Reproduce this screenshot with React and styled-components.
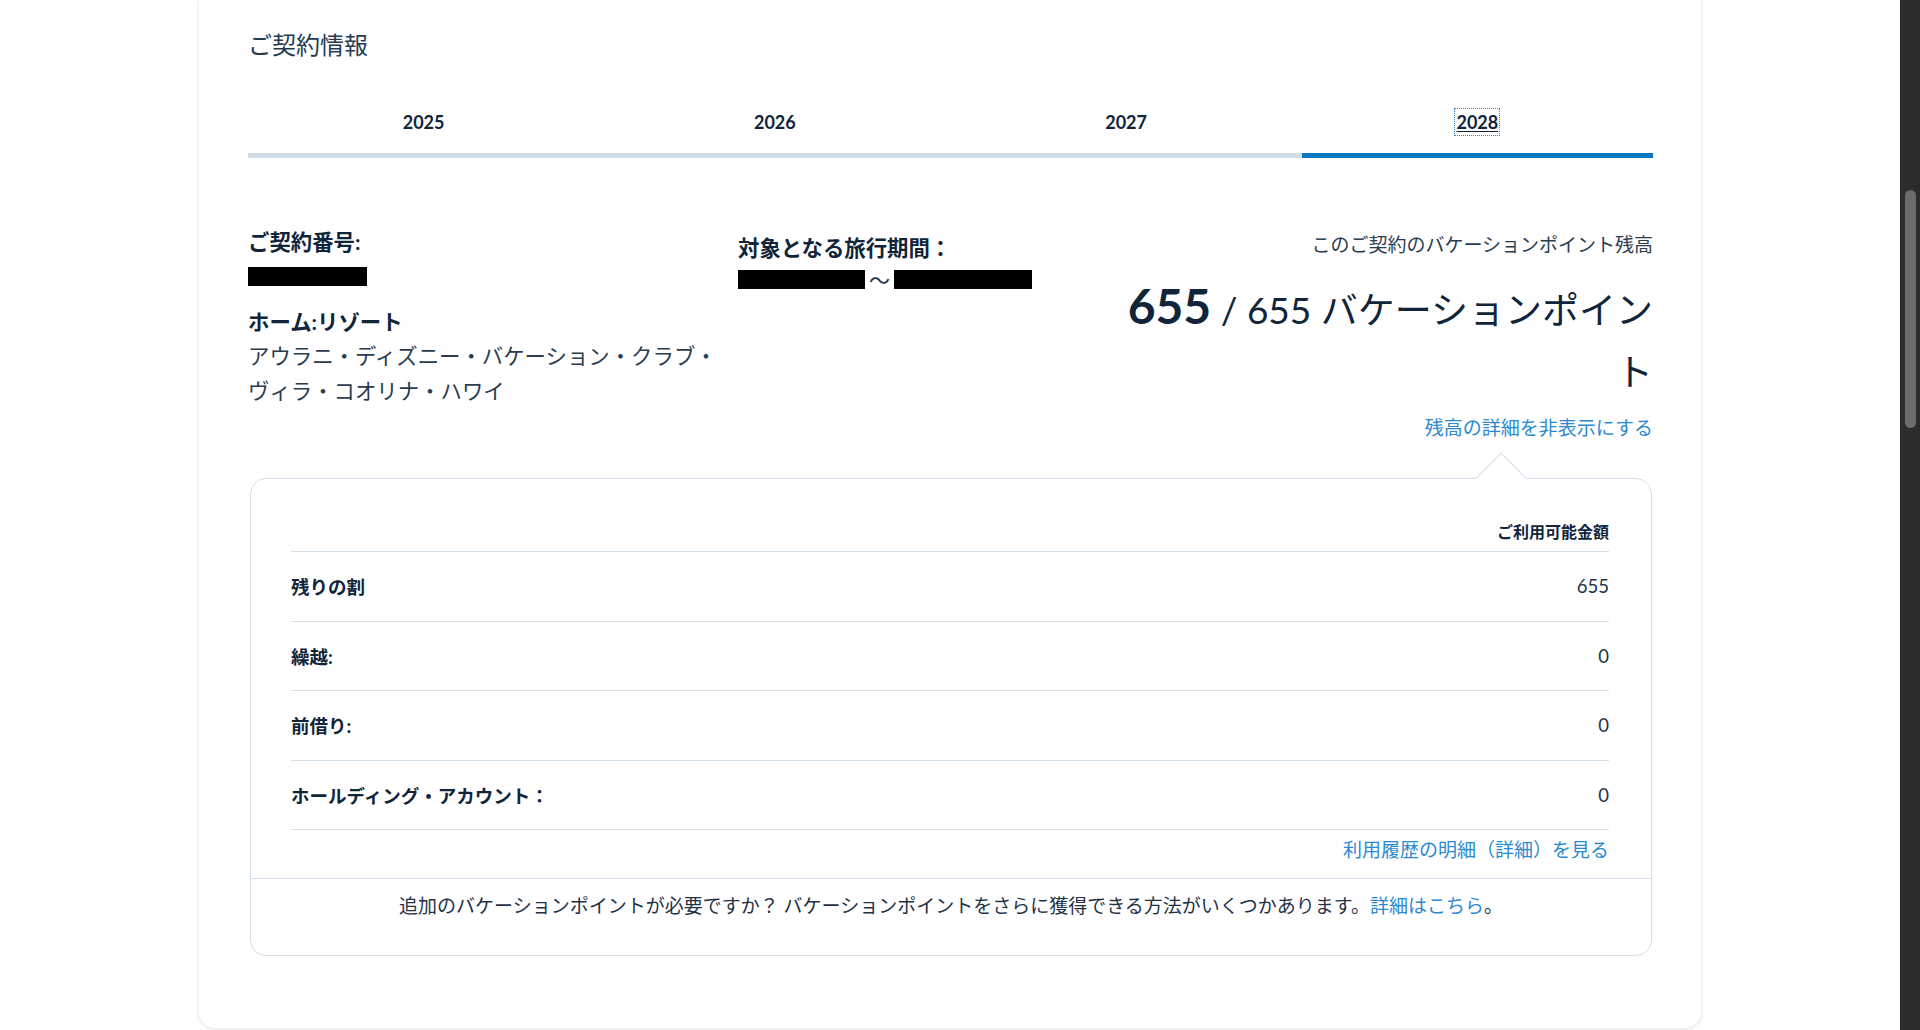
import React from 'react';
import styled, { createGlobalStyle } from 'styled-components';

// card 1502w, content 1405w
// tabs 4 x 351w, bar 5h
// panel 1401w, rows 69h

const GlobalStyle = createGlobalStyle`
  html, body {
    margin: 0;
    padding: 0;
    height: 100%;
    overflow: hidden;
    background: #fefefe;
  }
  body {
    font-family: "Lato", "Noto Sans CJK JP", "Noto Sans", sans-serif;
    color: #1f3347;
  }
  * { box-sizing: border-box; }
`;

const Shell = styled.div`
  display: flex;
  height: 1030px;
`;

const Viewport = styled.main`
  flex: 1;
  display: flex;
  justify-content: center;
  align-items: flex-end;
  padding-bottom: 2px;
`;

const Card = styled.section`
  width: 1502px;
  height: 1028px;
  background: #fff;
  border-radius: 0 0 16px 16px;
  box-shadow: 0 1px 4px rgba(20, 30, 45, 0.12);
  padding: 29px 48px 0 49px;
  display: flex;
  flex-direction: column;
`;

const Heading = styled.h2`
  margin: 0;
  font-size: 24px;
  line-height: 32px;
  font-weight: 400;
  color: #253a4f;
`;

const TabList = styled.div`
  display: flex;
  margin-top: 29px;
`;

const Tab = styled.div`
  flex: 1;
  text-align: center;
  padding: 20px 0 19px;
  border-bottom: 5px solid ${p => (p.$active ? '#0a79c2' : '#d1dde7')};
`;

const TabLabel = styled.span`
  display: inline-block;
  font-size: 18px;
  line-height: 24px;
  font-weight: 700;
  color: #10253a;
  ${p => p.$active && `
    text-decoration: underline;
    text-underline-offset: 2px;
    outline: 1px dotted #2b86cc;
    outline-offset: 1px;
  `}
`;

const Summary = styled.div`
  display: grid;
  grid-template-columns: 490px 373px 1fr;
  margin-top: 69px;
`;

const Column = styled.div`
  display: flex;
  flex-direction: column;
  align-items: ${p => (p.$right ? 'flex-end' : 'flex-start')};
  text-align: ${p => (p.$right ? 'right' : 'left')};
  padding-top: ${p => p.$offset || 0}px;
`;

const FieldLabel = styled.div`
  font-size: 21.4px;
  line-height: 30px;
  font-weight: 700;
  color: #10253a;
`;

const Redacted = styled.span`
  display: inline-block;
  width: ${p => p.$w}px;
  height: 19px;
  background: #000;
`;

const RedactedRow = styled.div`
  display: flex;
  align-items: center;
  margin-top: ${p => p.$gap}px;
`;

const Tilde = styled.span`
  font-size: 21px;
  line-height: 19px;
  margin: 0 4px;
  color: #1f3347;
`;

const ResortLabel = styled(FieldLabel)`
  line-height: 34px;
  margin-top: 19px;
`;

const ResortName = styled.div`
  font-size: 21.4px;
  line-height: 34.5px;
  color: #2a3d50;
`;

const BalanceCaption = styled.div`
  font-size: 19px;
  line-height: 28px;
  color: #2a3d50;
`;

const BalanceFigure = styled.div`
  margin-top: 16px;
  font-size: 37px;
  line-height: 62px;
  font-weight: 400;
  color: #10253a;
`;

const BalanceStrong = styled.strong`
  font-size: 48px;
  font-weight: 700;
`;

const TextLink = styled.a`
  color: #2a89cf;
  text-decoration: none;
  cursor: pointer;
`;

const ToggleLink = styled(TextLink)`
  margin-top: 11px;
  font-size: 19px;
  line-height: 28px;
`;

const Panel = styled.div`
  position: relative;
  margin: 36px 1px 0 2px;
  border: 1px solid #d3dfea;
  border-radius: 16px;
  background: #fff;
`;

const Notch = styled.span`
  position: absolute;
  top: -19px;
  right: 132px;
  width: 36px;
  height: 36px;
  background: #fff;
  border-top: 1px solid #d3dfea;
  border-left: 1px solid #d3dfea;
  transform: rotate(45deg);
`;

const PanelBody = styled.div`
  padding: 41px 42px 0 40px;
`;

const TableHead = styled.div`
  text-align: right;
  font-size: 16px;
  line-height: 24px;
  font-weight: 700;
  color: #10253a;
  padding-bottom: 7px;
  border-bottom: 1px solid #d3dfea;
`;

const Row = styled.div`
  display: flex;
  justify-content: space-between;
  align-items: center;
  height: 69.5px;
  border-bottom: 1px solid #d3dfea;
`;

const RowLabel = styled.span`
  font-size: 18.5px;
  font-weight: 700;
  color: #10253a;
`;

const RowValue = styled.span`
  font-size: 18.5px;
  color: #1f3347;
`;

const HistoryRow = styled.div`
  text-align: right;
  padding: 6px 0 14px;
  font-size: 19px;
  line-height: 28px;
`;

const PanelFooter = styled.div`
  border-top: 1px solid #d3dfea;
  padding: 13px 0 35px;
  text-align: center;
  font-size: 19px;
  line-height: 28px;
  color: #1f3347;
`;

const ScrollTrack = styled.div`
  width: 20px;
  background: #2c2c2c;
  display: flex;
  justify-content: center;
`;

const ScrollThumb = styled.div`
  width: 11px;
  height: 238px;
  margin-top: 190px;
  border-radius: 6px;
  background: #6c6c6c;
`;

const years = ['2025', '2026', '2027', '2028'];

const breakdown = [
  { label: '残りの割', value: '655' },
  { label: '繰越:', value: '0' },
  { label: '前借り:', value: '0' },
  { label: 'ホールディング・アカウント：', value: '0' },
];

export default function App() {
  const current = '2028';

  return (
    <>
      <GlobalStyle />
      <Shell>
        <Viewport>
          <Card>
            <Heading>ご契約情報</Heading>

            <TabList>
              {years.map(y => (
                <Tab key={y} $active={y === current}>
                  <TabLabel $active={y === current}>{y}</TabLabel>
                </Tab>
              ))}
            </TabList>

            <Summary>
              <Column>
                <FieldLabel>ご契約番号:</FieldLabel>
                <RedactedRow $gap={10}>
                  <Redacted $w={119} />
                </RedactedRow>
                <ResortLabel>ホーム:リゾート</ResortLabel>
                <ResortName>
                  アウラニ・ディズニー・バケーション・クラブ・ヴィラ・コオリナ・ハワイ
                </ResortName>
              </Column>

              <Column $offset={6}>
                <FieldLabel>対象となる旅行期間：</FieldLabel>
                <RedactedRow $gap={7}>
                  <Redacted $w={127} />
                  <Tilde>〜</Tilde>
                  <Redacted $w={138} />
                </RedactedRow>
              </Column>

              <Column $right $offset={4}>
                <BalanceCaption>このご契約のバケーションポイント残高</BalanceCaption>
                <BalanceFigure>
                  <BalanceStrong>655</BalanceStrong> / 655 バケーションポイント
                </BalanceFigure>
                <ToggleLink>残高の詳細を非表示にする</ToggleLink>
              </Column>
            </Summary>

            <Panel>
              <Notch />
              <PanelBody>
                <TableHead>ご利用可能金額</TableHead>
                {breakdown.map(r => (
                  <Row key={r.label}>
                    <RowLabel>{r.label}</RowLabel>
                    <RowValue>{r.value}</RowValue>
                  </Row>
                ))}
                <HistoryRow>
                  <TextLink>利用履歴の明細（詳細）を見る</TextLink>
                </HistoryRow>
              </PanelBody>
              <PanelFooter>
                追加のバケーションポイントが必要ですか？ バケーションポイントをさらに獲得できる方法がいくつかあります。
                <TextLink>詳細はこちら</TextLink>。
              </PanelFooter>
            </Panel>
          </Card>
        </Viewport>
        <ScrollTrack>
          <ScrollThumb />
        </ScrollTrack>
      </Shell>
    </>
  );
}
